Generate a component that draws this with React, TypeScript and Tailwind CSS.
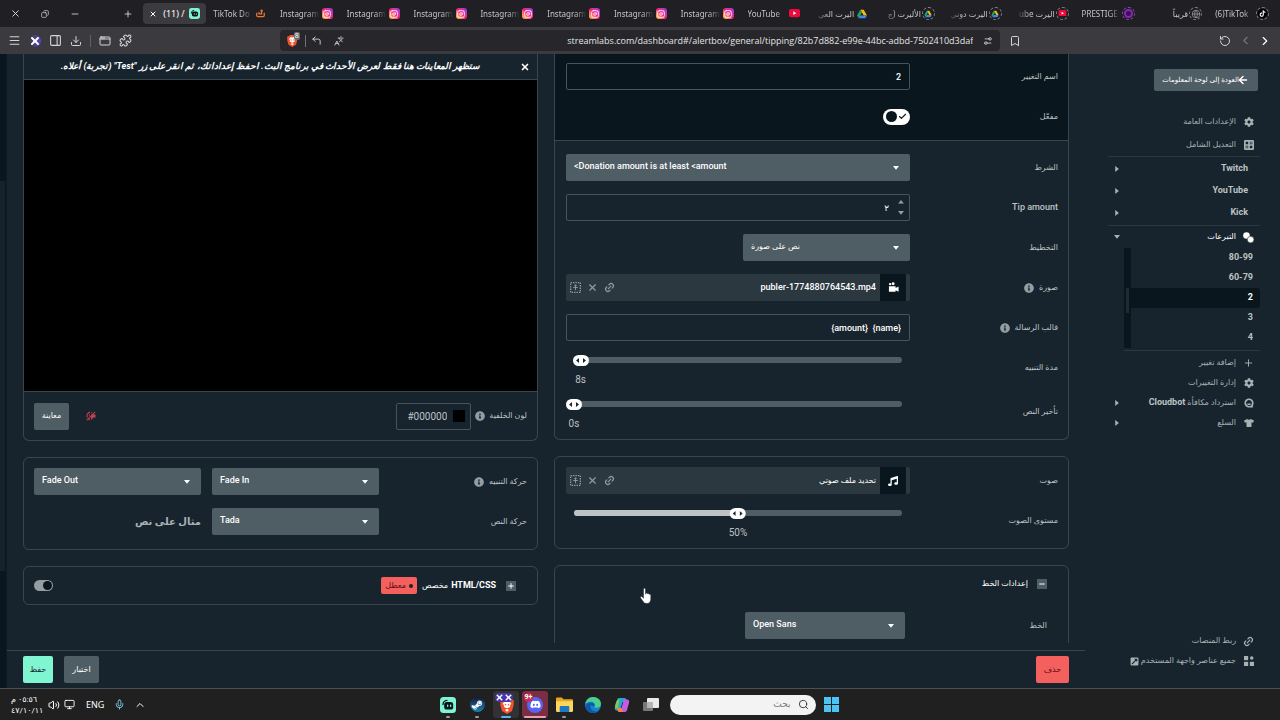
import { useState } from 'react'
import type { ReactNode } from 'react'
import {
  X, Minus, Plus, Copy, Menu, PanelRight, Download, AppWindow, Puzzle, Bookmark, RotateCcw,
  ChevronLeft, ChevronRight, ChevronUp, Instagram, Globe, Languages, Settings2, CornerUpLeft,
  Link2, ArrowLeft, Check, Volume2, Monitor, Mic, Search
} from 'lucide-react'
import { FaCog, FaInfoCircle, FaTshirt, FaMusic, FaDiscord, FaSteamSymbol, FaTiktok, FaExternalLinkSquareAlt } from 'react-icons/fa'
import { MdVolumeOff } from 'react-icons/md'

const CONTROL = 'block h-[27px] w-full rounded-[2px] border border-[#47545b] bg-transparent px-2 text-[9px] font-medium text-white outline-none'

/* ---------- Iconos dibujados ---------- */

const StreamlabsIcon = ({ className }: { className: string }) => (
  <svg viewBox="0 0 16 16" className={className}>
    <rect width="16" height="16" rx="3.5" fill="#80f5d2" />
    <path d="M3 7.5A4.5 4.5 0 0 1 7 3.4" fill="none" stroke="#09161d" strokeWidth="1.3" strokeLinecap="round" />
    <rect x="4.2" y="5" width="9" height="7.5" rx="2.6" fill="#09161d" />
    <rect x="7" y="7.5" width="1.3" height="2.4" rx=".6" fill="#80f5d2" />
    <rect x="10" y="7.5" width="1.3" height="2.4" rx=".6" fill="#80f5d2" />
  </svg>
)

const BraveIcon = ({ className }: { className: string }) => (
  <svg viewBox="0 0 14 16" className={className}>
    <path d="M4 0h6l1.500 1.600 1.500-.2 1 2.100-.5 1.500.3 1.500-1.800 6.500L7 16l-5-3L.2 6.500.5 5 0 3.500l1-2.100 1.500.2z" fill="#f4512c" />
    <path d="M7 3.200 9 2.800l2.300 2.600-1.500 2.300.4 1.200L7 10.300 3.800 8.900l.4-1.200-1.500-2.300L5 2.800z" fill="#fff" />
    <path d="M7 10.800 9 12l-2 1.700L5 12z" fill="#fff" />
    <path d="M4.300 5.700 6.200 6.200 6 8zM9.700 5.700l-1.900.5L8 8z" fill="#f4512c" />
  </svg>
)

const DriveIcon = () => (
  <svg viewBox="0 0 16 14" className="size-[10px]">
    <path d="M5.4 0h5.2L16 9.2h-5.2z" fill="#fbbc04" />
    <path d="M5.4 0 8 4.5 2.7 13.6 0 9.2z" fill="#1fa463" />
    <path d="M5.3 9.2H16l-2.7 4.6H2.6z" fill="#4285f4" />
  </svg>
)

const YoutubeIcon = () => (
  <svg viewBox="0 0 16 12" className="w-[11px]">
    <rect width="16" height="12" rx="3" fill="#f0093c" />
    <path d="M6.3 3.4v5.2L10.6 6z" fill="#fff" />
  </svg>
)

const InstagramIcon = () => (
  <span className="flex size-[11px] items-center justify-center rounded-[3px] bg-linear-to-tr from-[#ffc22e] via-[#f4197c] to-[#9322e8]">
    <Instagram className="size-[8px] text-white" strokeWidth={2.5} />
  </span>
)

const CupIcon = () => (
  <svg viewBox="0 0 12 12" className="size-[9px]" fill="none" stroke="#ea7434" strokeWidth="1.7">
    <path d="M1 5v3.800A1.500 1.500 0 0 0 2.500 10.300h7A1.500 1.500 0 0 0 11 8.800V5M4 4v2.500h3.500V2M6 3l1.500-1.500L9 3" />
  </svg>
)

// aro discontinuo alrededor del icono de una pestaña suspendida
const Ring = ({ children }: { children: ReactNode }) => (
  <span className="flex size-[13px] items-center justify-center rounded-full border border-dashed border-[#85858a]">
    <span className="flex scale-75 items-center justify-center">{children}</span>
  </span>
)

const GridIcon = () => (
  <svg viewBox="0 0 12 12" className="size-[10px]">
    <path fillRule="evenodd" d="M1.5 0h9A1.5 1.5 0 0 1 12 1.5v9a1.5 1.5 0 0 1-1.5 1.5h-9A1.5 1.5 0 0 1 0 10.500v-9A1.500 1.500 0 0 1 1.500 0zM2 2v3h3V2zm5 0v3h3V2zM2 7v3h3V7zm5 0v3h3V7z" fill="currentColor" />
    <path d="M8.500 2.500v2M7.500 3.500h2M3.500 7.500v2M2.500 8.500h2" stroke="currentColor" strokeWidth=".8" />
  </svg>
)

const CoinsIcon = () => (
  <svg viewBox="0 0 12 12" className="size-[11px]" fill="#fff">
    <circle cx="3.800" cy="3.800" r="3.600" />
    <circle cx="8.300" cy="8.300" r="3.600" stroke="#17242d" strokeWidth=".6" />
  </svg>
)

const WidgetsIcon = () => (
  <svg viewBox="0 0 12 12" className="size-[10px]" fill="currentColor">
    <rect y="0" width="5" height="5" />
    <circle cx="9.300" cy="2.500" r="2.100" />
    <rect y="7" width="5" height="5" />
    <rect x="7" y="7" width="5" height="5" />
  </svg>
)

const PickerIcon = () => (
  <svg viewBox="0 0 12 12" className="size-[11px]" fill="none" stroke="currentColor">
    <rect x=".7" y=".7" width="10.600" height="10.600" strokeWidth="1.400" strokeDasharray="1.500 1.150" />
    <path d="M6 3v6M3.500 6h5M4.800 4.300 6 3l1.200 1.300" strokeWidth="1" />
  </svg>
)

const CameraIcon = () => (
  <svg viewBox="0 0 12 12" className="size-[11px]" fill="#fff">
    <circle cx="2.300" cy="2.300" r="1.300" />
    <circle cx="5.600" cy="2" r="1.600" />
    <path d="M1 4.500h7.300v2L11.500 5v5.500L8.300 9v1.700H1z" />
  </svg>
)

const Caret = ({ className }: { className: string }) => (
  <svg viewBox="0 0 8 5" className={className} fill="currentColor"><path d="M0 0h8L4 5z" /></svg>
)

const CloudbotIcon = () => (
  <svg viewBox="0 0 12 12" className="size-[10px]" fill="none" stroke="currentColor" strokeWidth="2">
    <path d="M9.500 10.500H6A4.500 4.500 0 1 1 10.500 6c0 1.700-.6 2.800-1.500 3.700l1.500 1.300M4 7.500h4" />
  </svg>
)

/* ---------- Controles ---------- */

const Select = ({ label, options, className = '' }: { label: string; options: string[]; className?: string }) => (
  <div dir="ltr" className={`relative ${className}`}>
    <select aria-label={label} className="block h-[27px] w-full appearance-none rounded-[2px] bg-[#4f5d64] pr-6 pb-[2px] pl-2 text-[9px] font-medium text-white outline-none">
      {options.map(o => <option key={o}>{o}</option>)}
    </select>
    <Caret className="pointer-events-none absolute top-[12px] right-[11px] w-[6px] text-white" />
  </div>
)

const Row = ({ label, info, children, htmlFor }: { label: string; info?: boolean; children: ReactNode; htmlFor?: string }) => (
  <div className="flex items-start">
    <div className="flex h-[27px] w-[148px] shrink-0 items-center gap-[5px]">
      <label htmlFor={htmlFor} className={/[a-z]/i.test(label) ? 'text-[9px] font-medium text-[#bdc2c4]' : 'text-[8px] text-[#bdc2c4]'}>{label}</label>
      {info && <FaInfoCircle className="size-[10px] text-[#949da1]" />}
    </div>
    <div className="min-w-0 flex-1">{children}</div>
  </div>
)

const Slider = ({ label, start, max, unit, filled }: { label: string; start: number; max: number; unit: string; filled?: boolean }) => {
  const [value, setValue] = useState(start)
  const pct = (value / max) * 100

  return (
    <div dir="ltr" className="relative mx-2 h-[31px] pt-[3px]">
      <div className="h-[6px] rounded-full bg-[#4f5d64]">
        {filled && <div className="h-full rounded-full bg-[#bdc2c4]" style={{ width: `${pct}%` }} />}
      </div>
      <div className="pointer-events-none absolute top-px flex -translate-x-1/2 flex-col items-center gap-[8px]" style={{ left: `${pct}%` }}>
        <span className="flex h-[11px] w-[16px] items-center justify-center gap-[2px] rounded-full bg-white text-[#17242d]">
          <Caret className="w-[5px] rotate-90" />
          <Caret className="w-[5px] -rotate-90" />
        </span>
        <span className="text-[10px] leading-3 text-[#bdc2c4]">{value}{unit}</span>
      </div>
      <input
        type="range"
        aria-label={label}
        min={0}
        max={max}
        value={value}
        onChange={e => setValue(Number(e.target.value))}
        className="absolute inset-x-0 top-0 h-3 w-full opacity-0"
      />
    </div>
  )
}

const FileBar = ({ icon, name, small }: { icon: ReactNode; name: string; small?: boolean }) => (
  <div className="flex h-[27px] items-center rounded-[2px] bg-[#2b383f] pr-1 pl-[4px]">
    <div className="flex h-full w-[26px] items-center justify-center bg-[#09161d]">{icon}</div>
    <span dir="auto" className={small ? 'mr-1 text-[8px] text-white' : 'mr-1 text-[9px] font-medium text-white'}>{name}</span>
    <div className="mr-auto flex gap-[6px] text-[#949da1]">
      <button aria-label="رابط"><Link2 className="size-[11px] -rotate-45" strokeWidth={2.5} /></button>
      <button aria-label="إزالة"><X className="size-[11px]" strokeWidth={2.5} /></button>
      <button aria-label="تحديد"><PickerIcon /></button>
    </div>
  </div>
)

/* ---------- Navegador ---------- */

interface Tab {
  title: string
  icon: ReactNode
  rtl?: boolean
}

const insta: Tab = { title: 'Instagram', icon: <InstagramIcon /> }

const tabs: Tab[] = [
  { title: 'TikTok Do', icon: <CupIcon /> },
  insta, insta, insta, insta, insta, insta, insta,
  { title: 'YouTube', icon: <YoutubeIcon /> },
  { title: 'اليرت العي', icon: <DriveIcon />, rtl: true },
  { title: 'الأليرت (ج', icon: <Ring><DriveIcon /></Ring>, rtl: true },
  { title: 'اليرت دوني', icon: <Ring><DriveIcon /></Ring>, rtl: true },
  { title: 'اليرت ube', icon: <Ring><YoutubeIcon /></Ring>, rtl: true },
  { title: 'PRESTIGE', icon: <span className="flex size-[13px] items-center justify-center rounded-full border border-dashed border-[#8c4ab8]"><span className="size-[9px] rounded-full border-2 border-[#8b25b8] bg-[#3b1058]" /></span> },
  { title: 'قريباً', icon: <Ring><Globe className="size-[12px] text-[#a0a0a4]" /></Ring>, rtl: true },
  { title: '(6)TikTok', icon: <Ring><span className="rounded-full bg-black p-[2px]"><FaTiktok className="size-[9px] text-white" /></span></Ring> }
]

const TabBar = () => (
  <div className="flex h-[27px] shrink-0 items-center bg-[#202024] text-[#dededf]">
    <button aria-label="إغلاق" className="flex w-[30px] justify-center"><X className="size-[11px]" /></button>
    <button aria-label="استعادة" className="flex w-[30px] justify-center"><Copy className="size-[8px] -scale-x-100" /></button>
    <button aria-label="تصغير" className="flex w-[30px] justify-center"><Minus className="size-[10px]" /></button>
    <button aria-label="علامة تبويب جديدة" className="mr-[8px] ml-auto flex w-[14px] shrink-0 justify-center"><Plus className="size-[10px]" /></button>
    <div className="flex h-[21px] w-[63px] shrink-0 items-center rounded-[4px] bg-[#3b3b3f] px-[6px] text-[9px] text-white">
      <X className="size-[8px] shrink-0" strokeWidth={3} />
      <span className="ml-[6px] flex-1 whitespace-nowrap">(11) /</span>
      <StreamlabsIcon className="size-[11px]" />
    </div>
    <div className="mr-[5px] flex w-[83.5%] shrink-0">
      {tabs.map((tab, i) => (
        <div key={i} className="flex min-w-0 flex-1 items-center gap-px pr-[6px] pl-[7px]">
          <span
            dir={tab.rtl ? 'rtl' : 'ltr'}
            className={tab.rtl
              ? 'flex-1 mask-l-from-60% pl-px text-[8px] leading-4 whitespace-nowrap text-[#c5c5c8]'
              : 'flex-1 mask-r-from-70% pr-px text-[8px] leading-4 whitespace-nowrap text-[#c5c5c8]'}
          >
            {tab.title}
          </span>
          <span className="flex w-[13px] shrink-0 justify-center">{tab.icon}</span>
        </div>
      ))}
    </div>
  </div>
)

const AddressBar = () => (
  <div className="flex h-[27px] shrink-0 items-center bg-[#3b3b3f] px-[8px] text-[#d5d5d8]">
    <div className="flex flex-1 items-center gap-[8px]">
      <Menu className="size-[13px]" />
      <span className="flex size-[12px] items-center justify-center rounded-full bg-linear-to-r from-transparent to-[#5747c9] text-white"><X className="size-[12px]" strokeWidth={4} /></span>
      <PanelRight className="size-[13px]" />
      <Download className="size-[12px]" />
      <span className="h-3 w-px bg-[#606065]" />
      <AppWindow className="size-[12px]" />
      <Puzzle className="size-[13px]" />
    </div>
    <div className="flex h-[21px] w-[57%] items-center rounded-[4px] bg-[#27272b] px-[7px]">
      <span className="relative">
        <BraveIcon className="h-[12px]" />
        <span className="absolute -top-[3px] left-[7px] rounded-[2px] bg-[#6b6b70] px-[1px] text-[7px] leading-[8px] text-white">8</span>
      </span>
      <span className="ml-[8px] h-3 w-px bg-[#707075]" />
      <CornerUpLeft className="ml-[5px] size-[11px]" />
      <Languages className="ml-[12px] size-[10px] -scale-x-100" />
      <input
        aria-label="العنوان"
        defaultValue="streamlabs.com/dashboard#/alertbox/general/tipping/82b7d882-e99e-44bc-adbd-7502410d3daf"
        className="min-w-0 flex-1 bg-transparent text-right font-['Open_Sans',sans-serif] text-[9px] text-[#e4e4e6] outline-none"
      />
      <Settings2 className="ml-[10px] size-[10px] -scale-x-100" />
    </div>
    <div className="flex flex-1 items-center">
      <Bookmark className="ml-[9px] size-[12px]" />
      <RotateCcw className="mr-[8px] ml-auto size-[12px]" />
      <ChevronLeft className="mr-[6px] size-[13px] text-[#77777b]" />
      <ChevronRight className="size-[14px] text-white" />
    </div>
  </div>
)

/* ---------- Barra lateral ---------- */

const NavItem = ({ label, icon, caret, short, bright }: { label: string; icon?: ReactNode; caret?: 'side' | 'down'; short?: boolean; bright?: boolean }) => (
  <a href="#" className={`flex items-center pr-[6px] pl-[6px] text-[#a9b1b5] ${short ? 'h-5' : 'h-[22px]'}`}>
    {icon && <span className="ml-[7px] flex w-[11px] justify-center">{icon}</span>}
    <span className={icon ? (bright ? 'text-[8px] text-white' : 'text-[8px]') : 'pr-[6px] text-[9px] font-bold text-[#bdc2c4]'}>{label}</span>
    {label.endsWith('مكافأة') && <span className="mr-[2px] text-[9px] font-bold text-[#bdc2c4]">Cloudbot</span>}
    {caret === 'side' && <Caret className="mr-auto w-[6px] -rotate-90" />}
    {caret === 'down' && <Caret className="mr-auto w-[6px]" />}
  </a>
)

const Sidebar = () => (
  <nav className="flex w-[195px] shrink-0 flex-col pt-[15px] pr-[20px] pb-[17px] pl-[23px]">
    <button className="mr-[2px] flex h-[22px] w-[104px] items-center self-start rounded-[2px] bg-[#4f5d64] pr-[9px] text-[7px] whitespace-nowrap text-white">
      <ArrowLeft className="-ml-[2px] size-[12px] shrink-0" strokeWidth={3} />العودة إلى لوحة المعلومات
    </button>
    <div className="mt-5 flex flex-col gap-px border-b border-[#2b383f]">
      <NavItem label="الإعدادات العامة" icon={<FaCog className="size-[10px]" />} />
      <NavItem label="التعديل الشامل" icon={<GridIcon />} />
    </div>
    <div className="border-b border-[#2b383f] py-px">
      <NavItem label="Twitch" caret="side" />
      <NavItem label="YouTube" caret="side" />
      <NavItem label="Kick" caret="side" />
    </div>
    <NavItem label="التبرعات" icon={<CoinsIcon />} caret="down" bright />
    <div className="ml-[16px] flex border-b border-[#2b383f] pb-[2px]">
      <ul className="flex-1 text-[9px] font-bold text-[#bdc2c4]">
        {['80-99', '60-79', '2', '3', '4'].map(n => (
          <li key={n} className={n === '2' ? 'h-5 rounded-r-[3px] bg-[#09161d] text-white' : 'h-5'}>
            <a href="#" className="flex h-full items-center pr-[7px]"><bdi dir="ltr">{n}</bdi></a>
          </li>
        ))}
      </ul>
      <div className="w-[7px] bg-[#09161d] px-[2px] pt-[40px]">
        <div className="h-[25px] bg-[#1d2b33]" />
      </div>
    </div>
    <div className="mt-[2px]">
      <NavItem label="إضافة تغيير" icon={<Plus className="size-[12px]" />} short />
      <NavItem label="إدارة التغييرات" icon={<FaCog className="size-[10px]" />} short />
      <NavItem label="استرداد مكافأة" icon={<CloudbotIcon />} caret="side" short />
      <NavItem label="السلع" icon={<FaTshirt className="size-[10px]" />} caret="side" short />
    </div>
    <div className="mt-auto">
      <NavItem label="ربط المنصات" icon={<Link2 className="size-[11px] -rotate-45" strokeWidth={2.5} />} short />
      <a href="#" className="flex h-5 items-center pr-[6px] text-[8px] whitespace-nowrap text-[#a9b1b5]">
        <span className="ml-[7px] flex w-[11px] shrink-0 justify-center"><WidgetsIcon /></span>
        جميع عناصر واجهة المستخدم
        <FaExternalLinkSquareAlt className="mr-[2px] size-[9px] shrink-0" />
      </a>
    </div>
  </nav>
)

/* ---------- Contenido ---------- */

const SettingsColumn = () => (
  <div className="min-w-0 flex-1 space-y-4">
    <section className="rounded-b-[6px] border border-t-0 border-[#38464e]">
      <div className="space-y-[13px] border-b border-[#38464e] bg-[#09161d] pt-[9px] pr-[10px] pb-[10px] pl-[11px]">
        <Row label="اسم التغيير" htmlFor="variation-name">
          <input id="variation-name" dir="ltr" defaultValue="2" className={`${CONTROL} text-right`} />
        </Row>
        <Row label="مفعّل" htmlFor="enabled">
          <div className="flex h-[27px] items-center">
            <div className="relative flex h-[16px] w-[27px] items-center justify-between rounded-full bg-white px-[3px]">
              <Check className="size-[9px] text-[#09161d]" strokeWidth={3} />
              <span className="size-[11px] rounded-full bg-[#09161d]" />
              <input id="enabled" type="checkbox" defaultChecked className="absolute inset-0 opacity-0" />
            </div>
          </div>
        </Row>
      </div>
      <div className="space-y-[13px] pt-[13px] pr-[10px] pb-[10px] pl-[11px]">
        <Row label="الشرط">
          <Select label="الشرط" options={['<Donation amount is at least <amount']} />
        </Row>
        <Row label="Tip amount" htmlFor="tip-amount">
          <div className="relative">
            <input id="tip-amount" defaultValue="٢" className={`${CONTROL} pr-5`} />
            <span className="absolute inset-y-[6px] right-[6px] flex flex-col justify-between text-[#949da1]">
              <Caret className="w-[6px] rotate-180" />
              <Caret className="w-[6px]" />
            </span>
          </div>
        </Row>
        <Row label="التخطيط">
          <Select label="التخطيط" options={['نص على صورة']} className="w-[167px] [&>select]:text-[8px]" />
        </Row>
        <Row label="صورة" info>
          <FileBar icon={<CameraIcon />} name="publer-1774880764543.mp4" />
        </Row>
        <Row label="قالب الرسالة" info htmlFor="template">
          <input id="template" dir="ltr" defaultValue="{amount}  {name}" className={`${CONTROL} text-right`} />
        </Row>
        <Row label="مدة التنبيه"><Slider label="مدة التنبيه" start={8} max={400} unit="s" /></Row>
        <Row label="تأخير النص"><Slider label="تأخير النص" start={0} max={60} unit="s" /></Row>
      </div>
    </section>

    <section className="space-y-[13px] rounded-[6px] border border-[#38464e] py-[10px] pr-[10px] pl-[11px]">
      <Row label="صوت">
        <FileBar icon={<FaMusic className="size-[10px] text-white" />} name="تحديد ملف صوتي" small />
      </Row>
      <Row label="مستوى الصوت"><Slider label="مستوى الصوت" start={50} max={100} unit="%" filled /></Row>
    </section>

    <section className="rounded-[6px] border border-[#38464e] px-[21px] pt-[12px] pb-8">
      <button className="flex items-center gap-[9px] text-[8px] text-white">
        <span className="bg-[#4f5d64] p-[1px]"><Minus className="size-[8px]" strokeWidth={3} /></span>
        إعدادات الخط
      </button>
      <div className="mt-[22px] flex items-center">
        <span className="w-[142px] shrink-0 text-[8px] text-[#bdc2c4]">الخط</span>
        <Select label="الخط" options={['Open Sans']} className="w-[160px]" />
      </div>
    </section>
  </div>
)

const PreviewColumn = () => (
  <div className="min-w-0 flex-1 space-y-4">
    <section className="rounded-b-[6px] border border-t-0 border-[#38464e]">
      <div className="flex h-[26px] items-center gap-[10px] border-b border-[#38464e] px-[7px] text-white">
        <button aria-label="إغلاق"><X className="size-[10px]" strokeWidth={4} /></button>
        <p className="flex-1 text-center text-[9px] font-bold whitespace-nowrap italic">
          ستظهر المعاينات هنا فقط لعرض الأحداث في برنامج البث. احفظ إعداداتك، ثم انقر على زر "Test" (تجربة) أعلاه.
        </p>
      </div>
      <div className="h-[312px] border-b border-[#38464e] bg-black" />
      <div className="flex h-[48px] items-center px-[10px]">
        <label htmlFor="background" className="text-[8px] text-[#bdc2c4]">لون الخلفية</label>
        <FaInfoCircle className="mr-[4px] size-[10px] text-[#949da1]" />
        <div className="mr-[4px] flex h-[27px] w-[75px] items-center rounded-[2px] border border-[#47545b] pr-[5px]">
          <span className="size-[12px] shrink-0 bg-black" />
          <input id="background" dir="ltr" defaultValue="#000000" className="mr-[6px] w-full min-w-0 bg-transparent text-right text-[10px] text-[#bdc2c4] outline-none" />
        </div>
        <MdVolumeOff className="mr-auto size-[12px] -scale-x-100 text-[#c4434b]" />
        <button className="mr-[16px] h-[27px] w-[35px] rounded-[2px] bg-[#4f5d64] text-[8px] text-white">معاينة</button>
      </div>
    </section>

    <section className="space-y-[13px] rounded-[6px] border border-[#38464e] px-[10px] pt-[10px] pb-[14px]">
      <Row label="حركة التنبيه" info>
        <div className="grid grid-cols-2 gap-[11px]">
          <Select label="حركة الدخول" options={['Fade In']} />
          <Select label="حركة الخروج" options={['Fade Out']} />
        </div>
      </Row>
      <Row label="حركة النص">
        <div className="grid grid-cols-2 items-center gap-[11px]">
          <Select label="حركة النص" options={['Tada']} />
          <span className="text-[10px] font-bold text-[#a9b1b5]">مثال على نص</span>
        </div>
      </Row>
    </section>

    <section className="flex h-[39px] items-center rounded-[6px] border border-[#38464e] pr-[21px] pl-[10px]">
      <button aria-label="توسيع" className="bg-[#4f5d64] p-[1px] text-white"><Plus className="size-[8px]" strokeWidth={3} /></button>
      <h2 className="mr-[10px] flex items-center gap-[3px] text-[9px] font-bold text-white">
        HTML/CSS <span className="text-[8px] font-normal">مخصص</span>
      </h2>
      <span className="mr-[5px] flex h-[17px] items-center gap-[3px] rounded-[2px] bg-[#f4605d] px-[4px] text-[8px] text-[#5c1114]">
        <span className="size-[4px] rounded-full bg-[#17242d]" />معطل
      </span>
      <label className="relative mr-auto flex h-[11px] w-[19px] items-center rounded-full bg-[#949da1] px-[1px]">
        <span className="size-[9px] rounded-full bg-[#09161d]" />
        <input type="checkbox" aria-label="HTML/CSS مخصص" className="absolute inset-0 opacity-0" />
      </label>
    </section>
  </div>
)

/* ---------- Barra de tareas ---------- */

const TaskIcon = ({ children, bar = '' }: { children: ReactNode; bar?: string }) => (
  <button className="relative flex h-[27px] w-[29px] shrink-0 items-center justify-center">
    {children}
    {bar && <span className={`absolute bottom-0 h-[2px] rounded-full ${bar}`} />}
  </button>
)

const Taskbar = () => (
  <footer dir="ltr" className="grid h-[32px] shrink-0 grid-cols-[1fr_auto_1fr] items-center border-t border-[#4a5156] bg-[#202020] text-white">
    <div className="flex items-center pl-[11px]">
      <div dir="rtl" className="w-[26px] text-right text-[8px] leading-[11px] whitespace-nowrap">
        <div>٠٥:٥٦ م</div>
        <div dir="ltr">٤٧/١٠/١١</div>
      </div>
      <Volume2 className="ml-[11px] size-[12px]" />
      <Monitor className="ml-[4px] size-[11px]" />
      <span className="ml-[11px] font-['Noto_Sans',sans-serif] text-[9px]">ENG</span>
      <Mic className="ml-[10px] size-[11px] text-[#7fd0e8]" />
      <ChevronUp className="ml-[9px] size-[12px]" />
    </div>
    <div className="flex items-center pr-[2px]">
      <TaskIcon bar="w-1 bg-[#9a9a9a]"><StreamlabsIcon className="size-[16px]" /></TaskIcon>
      <TaskIcon bar="w-1 bg-[#9a9a9a]">
        <span className="flex size-[15px] items-center justify-center rounded-full bg-linear-to-b from-[#101b3a] to-[#1384b8]"><FaSteamSymbol className="size-[12px]" /></span>
      </TaskIcon>
      <TaskIcon bar="w-[10px] bg-[#5db4ec]">
        <span className="flex h-full w-[26px] items-center justify-center rounded-[3px] bg-[#323234]">
          <BraveIcon className="mt-[3px] ml-[2px] h-[16px]" />
        </span>
        <span className="absolute top-[2px] left-[3px] flex rounded-full bg-[#4737a8]"><X className="size-[9px]" strokeWidth={4} /><X className="size-[9px]" strokeWidth={4} /></span>
      </TaskIcon>
      <TaskIcon bar="w-[22px] bg-[#ef9cb4]">
        <span className="flex h-full w-[26px] items-center justify-center rounded-[3px] bg-[#7a2d43]">
          <span className="flex size-[16px] items-center justify-center rounded-full bg-[#5865f2]"><FaDiscord className="size-[11px]" /></span>
        </span>
        <span className="absolute top-[2px] left-[3px] rounded-full bg-[#c4314b] px-[1px] text-[7px] leading-[9px] font-bold">9+</span>
      </TaskIcon>
      <TaskIcon bar="w-1 bg-[#9a9a9a]">
        <svg viewBox="0 0 16 14" className="w-[17px]">
          <path d="M0 1.500A1 1 0 0 1 1 .5h4.500L7 2h8a1 1 0 0 1 1 1v10H0z" fill="#e9a820" />
          <path d="M0 4h16v9a1 1 0 0 1-1 1H1a1 1 0 0 1-1-1z" fill="#ffd65c" />
          <path d="M3.500 14V9.500a1 1 0 0 1 1-1h7a1 1 0 0 1 1 1V14z" fill="#2277c4" />
        </svg>
      </TaskIcon>
      <TaskIcon>
        <svg viewBox="0 0 16 16" className="size-[16px]">
          <circle cx="8" cy="8" r="8" fill="#1480d2" />
          <path d="M.3 7C1 2.800 4.200 0 8 0c4.600 0 8 3.200 8 6.800 0 2.400-1.800 4-4.200 4-1.600 0-2.700-.6-2.300-1.300C11 7.500 9 4.700 6 4.700 3.500 4.700 1.200 5.700.3 7z" fill="#4bcf8d" />
          <path d="M5.500 8c-.8 3.800 2.200 6.800 6 6.400 1.200-.2 2.300-.8 3-1.600A8 8 0 0 1 8 16c-4 0-7.200-3-7.200-6.400C.8 7 3 5.500 5.700 5.500c2 0 3.800 1.300 3.800 3 0 .6-.3 1-.3 1" fill="#1057a8" />
        </svg>
      </TaskIcon>
      <TaskIcon>
        <svg viewBox="0 0 16 16" className="size-[16px]">
          <path d="M5 1h5.500c1 0 1.500.6 1.800 1.500L13 5H8.500L6.500 12c-.4 1-1 1.500-2 1.500H3c-2 0-2.600-1.300-2-3.500l2-7C3.400 1.700 4 1 5 1z" fill="#23a5d8" />
          <path d="M3 3.500 5.500 2 4 11H1c-.2-2.500 1-6 2-7.500z" fill="#83c94a" />
          <path d="M11 15H5.500c-1 0-1.500-.6-1.800-1.500L3 11h4.500l2-7c.4-1 1-1.500 2-1.500H13c2 0 2.600 1.300 2 3.500l-2 7c-.4 1.300-1 2-2 2z" fill="#c65be0" />
          <path d="M3 11h4.500L9 14.900H5.500c-1 0-1.500-.6-1.800-1.400z" fill="#f7813f" />
        </svg>
      </TaskIcon>
      <TaskIcon>
        <svg viewBox="0 0 16 14" className="w-[16px]">
          <rect y="4" width="10" height="9" rx="1" fill="#77777a" />
          <rect x="4" width="12" height="10" rx="1" fill="#e9e9ea" />
          <rect x="4" y="4" width="6" height="6" fill="#b3b3b5" />
        </svg>
      </TaskIcon>
      <label dir="rtl" className="ml-1 flex h-[20px] w-[146px] items-center rounded-full bg-[#f3f3f3] px-[7px] text-[#33363c]">
        <Search className="size-[11px] shrink-0" />
        <input placeholder="بحث" aria-label="بحث" className="mr-[7px] w-full min-w-0 bg-transparent text-[9px] outline-none placeholder:text-[#77797d]" />
      </label>
      <TaskIcon>
        <span className="ml-[2px] grid grid-cols-2 gap-[1px] *:size-[7px] *:bg-[#4cc2f5]"><i /><i /><i /><i /></span>
      </TaskIcon>
    </div>
  </footer>
)

export default function App() {
  return (
    <div className="relative flex h-screen flex-col overflow-hidden bg-[#17242d] [font-family:Roboto,'DejaVu_Sans',sans-serif]">
      <header dir="ltr" className="font-['Noto_Sans','DejaVu_Sans',sans-serif]">
        <TabBar />
        <AddressBar />
      </header>

      <div dir="rtl" className="flex min-h-0 flex-1">
        <Sidebar />
        <div className="flex min-w-0 flex-1 flex-col">
          <main className="mb-[7px] flex min-h-0 flex-1 items-start gap-4 overflow-hidden px-4">
            <SettingsColumn />
            <PreviewColumn />
          </main>
          <div className="flex h-[38px] shrink-0 items-center gap-[11px] border-t border-[#38464e] px-4 text-[8px]">
            <button className="h-[27px] w-[33px] rounded-[2px] bg-[#f4605d] text-[#5c1114]">حذف</button>
            <button className="mr-auto h-[27px] w-[35px] rounded-[2px] bg-[#4f5d64] text-white">اختبار</button>
            <button className="h-[27px] w-[30px] rounded-[2px] bg-[#80f5d2] text-[#17242d]">حفظ</button>
          </div>
        </div>
        <div className="w-[7px] shrink-0 border-r border-[#101c24] bg-[#09161d] pt-[127px] pr-px">
          <div className="h-[390px] bg-[#14222b]" />
        </div>
      </div>

      <Taskbar />

      {/* puntero */}
      <svg viewBox="0 0 12 16" className="pointer-events-none absolute top-[588px] left-[640px] h-[16px]" fill="#fff" stroke="#17242d" strokeWidth=".5">
        <path d="M3.500 1.200c0-1.400 2-1.400 2 0v5l.3-.8c.5-.7 1.500-.4 1.600.4.600-.6 1.500-.3 1.700.5.700-.4 1.700 0 1.700 1v3.500c0 3-1.500 4.700-4 4.700-2.200 0-3.300-1-4-2.500L.6 10c-.6-1 .8-2 1.700-1l1.200 1.200z" />
      </svg>
    </div>
  )
}
